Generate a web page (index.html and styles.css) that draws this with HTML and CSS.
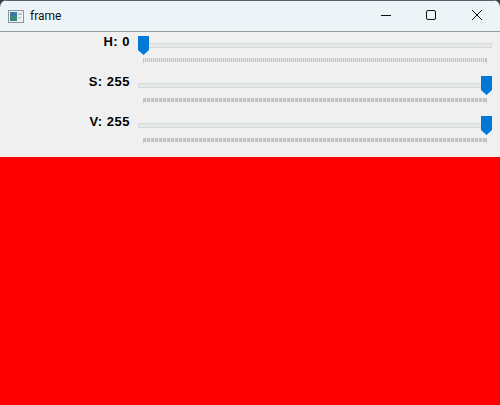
FILE: index.html
```html
<!DOCTYPE html>
<html lang="en">
<head>
    <meta charset="UTF-8">
    <title>frame</title>
    <link rel="stylesheet" href="styles.css">
</head>
<body>

    <div class="window">
        <div class="titlebar">
            <svg class="app-icon" width="16" height="13" viewBox="0 0 16 13">
                <rect x="0.5" y="0.5" width="15" height="12" fill="#eef2f2" stroke="#8e9699"/>
                <rect x="2" y="2" width="7" height="9" fill="#3a8a80"/>
                <rect x="2" y="2" width="7" height="4" fill="#3f76a8"/>
                <rect x="10" y="3" width="4" height="2" fill="#b9cbc6"/>
                <rect x="10" y="7" width="3" height="2" fill="#c6d2cf"/>
            </svg>
            <span class="title">frame</span>
            <div class="controls">
                <svg class="control" width="46" height="30" viewBox="0 1 46 30">
                    <path d="M19 15.5h10" stroke="#111" fill="none"/>
                </svg>
                <svg class="control" width="46" height="30" viewBox="0 1 46 30">
                    <rect x="18.5" y="10.500" width="9" height="9" rx="1.5" stroke="#111" fill="none"/>
                </svg>
                <svg class="control" width="46" height="30" viewBox="0 1 46 30">
                    <path d="M18 10l10 10M28 10l-10 10" stroke="#111" fill="none"/>
                </svg>
            </div>
        </div>

        <div class="panel">
            <div class="row">
                <label class="label">H: 0</label>
                <div class="slider">
                    <div class="track"></div>
                    <div class="ticks ticks-fine"></div>
                    <svg class="thumb thumb-min" width="11" height="19" viewBox="0 0 11 19"><path d="M0 0h11v14l-5.500 5-5.500-5z"/></svg>
                </div>
            </div>
            <div class="row">
                <label class="label">S: 255</label>
                <div class="slider">
                    <div class="track"></div>
                    <div class="ticks"></div>
                    <svg class="thumb thumb-max" width="11" height="19" viewBox="0 0 11 19"><path d="M0 0h11v14l-5.500 5-5.500-5z"/></svg>
                </div>
            </div>
            <div class="row">
                <label class="label">V: 255</label>
                <div class="slider">
                    <div class="track"></div>
                    <div class="ticks"></div>
                    <svg class="thumb thumb-max" width="11" height="19" viewBox="0 0 11 19"><path d="M0 0h11v14l-5.500 5-5.500-5z"/></svg>
                </div>
            </div>
        </div>

        <div class="image"></div>
    </div>

</body>
</html>
```

FILE: styles.css
```css
html, body {
    margin: 0;
    height: 100%;
    background-color: #3a3f44;
    overflow: hidden;
}

.window {
    width: 500px;
    height: 405px;
    display: flex;
    flex-direction: column;
    border-radius: 7px 7px 0 0;
    overflow: hidden;
}

.titlebar {
    height: 30px;
    flex: none;
    display: flex;
    align-items: center;
    background-color: #ecf4f8;
    border-top: 1px solid #5c6266;
    border-bottom: 1px solid #9a9c9e;
    padding-left: 8px;
}

.app-icon {
    margin-right: 6px;
}

.title {
    font-family: Roboto, sans-serif;
    font-size: 12px;
    color: #111;
}

.controls {
    margin-left: auto;
    display: flex;
}

.panel {
    height: 125px;
    flex: none;
    background-color: #f0f0f0;
    padding-top: 4px;
    box-sizing: border-box;
}

.row {
    height: 40px;
    display: flex;
}

.label {
    width: 130px;
    flex: none;
    text-align: right;
    font-family: "Liberation Sans", sans-serif;
    font-weight: bold;
    font-size: 13px;
    letter-spacing: 0.5px;
    line-height: 11px;
    color: #000;
}

.slider {
    position: relative;
    margin-left: 8px;
    width: 354px;
    padding-top: 7px;
}

.track {
    height: 3px;
    background-color: #e7eaea;
    border: 1px solid #d6d9d9;
}

.ticks {
    height: 5px;
    margin: 10px 5px 0 5px;
    background-image:
        linear-gradient(#c4c4c4, #c4c4c4),
        linear-gradient(#c4c4c4, #c4c4c4),
        repeating-linear-gradient(to right, #c4c4c4 0, #c4c4c4 3px, #e6e6e6 3px, #e6e6e6 4px);
    background-size: 1px 5px, 1px 5px, 100% 4px;
    background-position: left top, right top, left top;
    background-repeat: no-repeat;
}

.ticks-fine {
    background-image:
        linear-gradient(#c4c4c4, #c4c4c4),
        linear-gradient(#c4c4c4, #c4c4c4),
        repeating-linear-gradient(to right, #c2c2c2 0, #c2c2c2 1px, #e8e8e8 1px, #e8e8e8 2px);
}

.thumb {
    position: absolute;
    top: 0;
    fill: #0078d7;
}

.thumb-min {
    left: 0;
}

.thumb-max {
    right: 0;
}

.image {
    flex: 1;
    background-color: #ff0000;
}
```
